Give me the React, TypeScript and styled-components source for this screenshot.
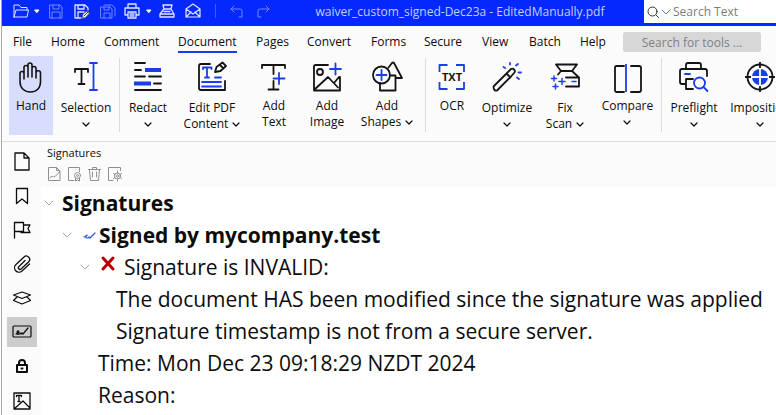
import React from 'react';
import styled, { createGlobalStyle, css } from 'styled-components';

const blue = '#0528ff';
const accent = '#1a3fe6';
const ink = '#141414';

const GlobalStyle = createGlobalStyle`
  *, *::before, *::after { box-sizing: border-box; }
  body { margin: 0; background: #fff; overflow: hidden; }
  button, input { font: inherit; color: inherit; }
`;

const Window = styled.div`
  display: flex;
  flex-direction: column;
  min-height: 100vh;
  margin-left: 1px;
  border-left: 1px solid #a8a8a8;
  background: #fbfbfb;
  color: #0c0c0c;
  font: 12px/16px 'Open Sans', 'Noto Sans', sans-serif;
`;

const TitleBar = styled.header`
  display: flex;
  align-items: flex-start;
  height: 26px;
  padding-left: 10px;
  background: ${blue};
  color: #dfe4ff;
`;

const QuickButton = styled.button<{ $width: number; $dim?: boolean }>`
  display: flex;
  align-items: center;
  justify-content: center;
  flex: none;
  width: ${(p) => p.$width}px;
  height: 22px;
  padding: 0;
  border: 0;
  background: none;
  opacity: ${(p) => (p.$dim ? 0.5 : 1)};
`;

const QuickDivider = styled.span`
  flex: none;
  width: 1px;
  height: 14px;
  margin: 4px 8px 0 9px;
  background: #3f5cff;
`;

const FileName = styled.h1`
  flex: 1;
  margin: 0;
  padding-top: 4px;
  color: #c3ccff;
  font-size: 12px;
  font-weight: 400;
  line-height: 16px;
  text-align: center;
  white-space: nowrap;
`;

const TextSearch = styled.label`
  display: flex;
  align-items: center;
  flex: none;
  gap: 2px;
  width: 132px;
  height: 23px;
  padding-left: 3px;
  background: #fff;
`;

const TextSearchInput = styled.input`
  flex: 1;
  min-width: 0;
  padding: 0;
  border: 0;
  outline: 0;
  background: none;
  &::placeholder { color: #7d7d7d; opacity: 1; }
`;

const MenuBar = styled.nav`
  display: flex;
  align-items: center;
  height: 30px;
  padding: 2px 0 0 11px;
`;

const MenuLink = styled.a<{ $width: number; $active?: boolean }>`
  flex: none;
  width: ${(p) => p.$width}px;
  padding-top: 2px;
  color: inherit;
  text-decoration: none;
  white-space: nowrap;
  span {
    display: inline-block;
    padding-bottom: 1px;
    border-bottom: 2px solid ${(p) => (p.$active ? accent : 'transparent')};
  }
`;

const ToolSearch = styled.input`
  flex: none;
  width: 138px;
  height: 20px;
  padding: 0;
  border: 0;
  border-radius: 2px;
  background: #d7d7d7;
  text-align: center;
  &::placeholder { color: #7f7f7f; opacity: 1; }
`;

const Ribbon = styled.div`
  display: flex;
  height: 86px;
  padding-left: 7px;
  border-bottom: 1px solid #dedede;
  overflow: hidden;
`;

const Tool = styled.button<{ $width: number; $active?: boolean; $low?: boolean }>`
  display: flex;
  flex-direction: column;
  align-items: center;
  flex: none;
  gap: ${(p) => (p.$low ? 7 : 5)}px;
  width: ${(p) => p.$width}px;
  height: 79px;
  padding: 5px 0 0;
  border: 0;
  background: ${(p) => (p.$active ? '#d9ddfd' : 'none')};
`;

const ToolLabel = styled.span`
  display: flex;
  flex-direction: column;
  align-items: center;
  line-height: 16px;
  white-space: nowrap;
`;

const LabelLine = styled.span`
  display: flex;
  align-items: center;
  gap: 4px;
  height: 16px;
`;

const RibbonDivider = styled.span<{ $space?: number }>`
  flex: none;
  width: 1px;
  height: 74px;
  margin: 2px 0 0 ${(p) => p.$space ?? 0}px;
  background: #dcdcdc;
`;

const Workspace = styled.div`
  display: flex;
  flex: 1;
`;

const SideBar = styled.nav`
  display: flex;
  flex-direction: column;
  flex: none;
  gap: 4px;
  width: 39px;
  padding: 5px 0 0 5px;
`;

const SideButton = styled.button<{ $active?: boolean }>`
  display: flex;
  align-items: center;
  justify-content: center;
  width: 30px;
  height: 30px;
  padding: 0;
  border: 0;
  background: ${(p) => (p.$active ? '#cccccc' : 'none')};
`;

const Panel = styled.section`
  display: flex;
  flex: 1;
  flex-direction: column;
`;

const PanelHeader = styled.div`
  height: 45px;
  padding: 3px 0 0 6px;
`;

const PanelTitle = styled.h2`
  margin: 0;
  font-size: 11px;
  font-weight: 400;
  line-height: 16px;
`;

const PanelTools = styled.div`
  display: flex;
  gap: 4px;
  padding-top: 5px;
`;

const PanelButton = styled.button`
  display: flex;
  width: 16px;
  height: 16px;
  padding: 0;
  border: 0;
  background: none;
`;

const Tree = styled.ul`
  flex: 1;
  margin: 0;
  padding: 0;
  background: #fff;
  list-style: none;
`;

const TreeRow = styled.li<{ $indent: number; $bold?: boolean }>`
  display: flex;
  align-items: center;
  height: 32px;
  padding-left: ${(p) => p.$indent}px;
  font-size: 21px;
  line-height: 32px;
  white-space: nowrap;
  ${(p) => p.$bold && css`font-weight: 700;`}
`;

const Toggle = styled.button<{ $space: number }>`
  display: flex;
  flex: none;
  width: 10px;
  margin-right: ${(p) => p.$space}px;
  padding: 0;
  border: 0;
  background: none;
`;

const StatusIcon = styled.span<{ $space: number }>`
  display: flex;
  flex: none;
  margin-right: ${(p) => p.$space}px;
`;

const Svg = styled.svg`
  display: block;
  flex: none;
  overflow: visible;
  fill: none;
  stroke: currentColor;
  stroke-linecap: round;
  stroke-linejoin: round;
`;

type IconProps = { w?: number; h?: number; stroke?: number; children: React.ReactNode };

const Icon = ({ w = 16, h = 16, stroke = 1, children }: IconProps) => (
  <Svg width={w} height={h} viewBox={`0 0 ${w} ${h}`} strokeWidth={stroke} aria-hidden="true">
    {children}
  </Svg>
);

const BigIcon = ({ children }: { children: React.ReactNode }) => (
  <Icon w={32} h={32} stroke={1.8}><g stroke={ink}>{children}</g></Icon>
);

const Caret = () => <Icon w={8} h={5}><path d="M2 1h4L4 3.500z" fill="#fff" stroke="#fff" /></Icon>;
const Chevron = () => <Icon w={8} h={5} stroke={1.2}><path d="M1 1l3 3 3-3" /></Icon>;

const quickItems = [
  { name: 'Open', width: 18, icon: <Icon><path d="M1 14V2h5l2 2.500h6V7M1 14h13l1.500-7H3L1 14" /></Icon> },
  { name: 'Open menu', width: 14, icon: <Caret /> },
  { name: 'Save', width: 24, dim: true, icon: <Icon><path d="M2 2h10l2 2v11H2zM5 2v4h6V2M4 15V9h8v6" /></Icon> },
  {
    name: 'Save as', width: 28,
    icon: <Icon stroke={1.3}><path d="M7 15H1V2h10l3 3v2M4 2v4h6V2M4 15V9h6" /><path d="M8 15l1-4 4-3 2.500 2-4 4.500z" fill="#fff" stroke="#5a5a5a" strokeWidth="1" /><path d="M10 13l4-4" stroke="#333" strokeWidth="1" /></Icon>,
  },
  { name: 'Save all', width: 24, dim: true, icon: <Icon><path d="M1 4h9l2 2v9H1zM4 4v3h5V4M4 15v-5h6v5M4 2h8l3 3v8" /></Icon> },
  { name: 'Print', width: 24, icon: <Icon stroke={1.3}><path d="M4 5V1h8v4M4 12H1V5h14v7h-3M4 9h8v6H4zM6 11h4M6 13h4" /></Icon> },
  { name: 'Print menu', width: 10, icon: <Caret /> },
  { name: 'Scan', width: 26, icon: <Icon stroke={1.3}><path d="M4 2h9l-1 4H5zM5 6l-4 5v3h14v-3l-3-5M1 11h14M5 8.500h6" /></Icon> },
  { name: 'Email', width: 26, icon: <Icon stroke={1.2}><path d="M1 6l7-5 7 5v8H1zM1 6l7 5 7-5M1 14l5-5M15 14l-5-5" /></Icon> },
];

const menuItems = [
  { name: 'File', width: 38 }, { name: 'Home', width: 53 }, { name: 'Comment', width: 74 },
  { name: 'Document', width: 78, active: true }, { name: 'Pages', width: 51 },
  { name: 'Convert', width: 64 }, { name: 'Forms', width: 53 }, { name: 'Secure', width: 58 },
  { name: 'View', width: 47 }, { name: 'Batch', width: 51 }, { name: 'Help', width: 43 },
];

type ToolItem = {
  lines: string[];
  width: number;
  menu?: 'inline' | 'below';
  active?: boolean;
  low?: boolean;
  icon: React.ReactNode;
};

const HandIcon = () => (
  <BigIcon>
    <path strokeWidth="1.600" d="M5 21V12.500a2 2 0 0 1 4 0V18M9 13V6.500a2 2 0 0 1 4 0V16M13 7V4a2 2 0 0 1 4 0v12M17 7.500a2 2 0 0 1 4 0V17M21 14v-2a2.200 2.200 0 0 1 4.500 0v9c0 6-4 10-10 10S5 27 5 21" />
  </BigIcon>
);
const SelectionIcon = () => (
  <BigIcon>
    <path d="M5 11V8h13v3M11.500 8v15M8.500 23h6" />
    <path stroke={accent} d="M20 2h7M20 29h7M23.500 2v27" />
  </BigIcon>
);
const RedactIcon = () => (
  <BigIcon>
    <path d="M3 2h10M3 9h6M3 15.500h10M17 15.500h12M22 22.500h7M3 29h26" />
    <path stroke={accent} strokeWidth="4" strokeLinecap="butt" d="M13 9h16M2 22.500h17" />
  </BigIcon>
);
const EditIcon = () => (
  <BigIcon>
    <path d="M14 3H5Q3 3 3 5v22q0 2 2 2h24V20M19 11l1.500-5 6-4.500 3.500 3.500-5.500 5zM24 4l3 3" />
    <path stroke={accent} d="M7 8V6.500h8.500V8M11 7v9M9 16.500h4M19 16.500h6M6 21h19M6 25.500h19" />
  </BigIcon>
);
const AddTextIcon = () => (
  <BigIcon>
    <path d="M4 7V4h23v3M15.500 4v9M15.500 20v8M10.500 28.500h10" />
    <path stroke={accent} d="M15.500 17.500h11M21 12v11" />
  </BigIcon>
);
const AddImageIcon = () => (
  <BigIcon>
    <path d="M17 4H4.500Q3 4 3 5.500V29.500H29V16M3 29l14-13 10 10.500M23 22l5-6" />
    <circle cx="9" cy="11" r="3" />
    <path stroke={accent} d="M19 8h11M24.500 2.500v11" />
  </BigIcon>
);
const AddShapesIcon = () => (
  <BigIcon>
    <path d="M17.500 6.500L21 2q1-1 2 0l8 15H25M9 22v7.500h15.500v-15H20" />
    <circle cx="10.500" cy="14" r="8.500" />
    <path stroke={accent} d="M5.500 14h10M10.500 9v10" />
  </BigIcon>
);
const OcrIcon = () => (
  <BigIcon>
    <path stroke={accent} strokeLinecap="butt" d="M3.500 11V4h8M20 4h8v7M28 21v7h-8M11.500 28h-8v-7" />
    <text x="16" y="20" textAnchor="middle" fill={ink} stroke="none" fontSize="11" fontWeight="700">TXT</text>
  </BigIcon>
);
const OptimizeIcon = () => (
  <BigIcon>
    <path d="M2.500 25.500L16 12l4-4q1.500-1 3 .5t.5 3l-4 4.500L6 29.500q-1.500.5-2.500-.5t-1-3.500zM15.500 12.500l4 4" />
    <path stroke={accent} d="M14 7l-1.500-1M19 3.500V2M25 4.500L27 3M27.500 11.500H30M26 16.500l2 1.500" />
  </BigIcon>
);
const FixIcon = () => (
  <BigIcon>
    <path d="M7 3.500h21l-5 6.500h-11zM12 10L9 13.500M23 10l7 6.500v9H17M17 16.500h13" />
    <path stroke={accent} strokeWidth="1.500" d="M5 15v5M2.500 17.500h5M13 17.500v6M10 20.500h6M6.500 23v5M4 25.500h5M23 20.500h4" />
  </BigIcon>
);
const CompareIcon = () => (
  <BigIcon>
    <path d="M12 5H4.500Q3 5 3 6.500V29.500Q3 31 4.500 31H12M19 5h8q2 0 2 2v22q0 2-2 2h-8" />
    <path stroke={accent} strokeLinecap="butt" d="M14 3v28" />
  </BigIcon>
);
const PreflightIcon = () => (
  <BigIcon>
    <path d="M8 8V4q0-2 2-2h11q2 0 2 2v4M7 23H4q-2 0-2-2V10q0-2 2-2h23q2 0 2 2v5M15 28H8V18h7" />
    <path stroke={accent} d="M7 13h5M25.500 26l4 4" />
    <circle cx="21.500" cy="22" r="5.500" stroke={accent} />
  </BigIcon>
);
const ImpositionIcon = () => (
  <BigIcon>
    <circle cx="16" cy="16" r="12.500" />
    <circle cx="16" cy="16" r="8" fill={accent} stroke="none" />
    <path stroke="#fff" strokeLinecap="butt" d="M8 16h16M16 8v16" />
    <path strokeLinecap="butt" d="M1 16h6M25 16h6M16 1v6M16 25v6" />
  </BigIcon>
);

const toolGroups: ToolItem[][] = [
  [
    { lines: ['Hand'], width: 44, active: true, icon: <HandIcon /> },
    { lines: ['Selection'], width: 66, menu: 'below', low: true, icon: <SelectionIcon /> },
  ],
  [
    { lines: ['Redact'], width: 56, menu: 'below', low: true, icon: <RedactIcon /> },
    { lines: ['Edit PDF', 'Content'], width: 72, menu: 'inline', low: true, icon: <EditIcon /> },
    { lines: ['Add', 'Text'], width: 52, icon: <AddTextIcon /> },
    { lines: ['Add', 'Image'], width: 54, icon: <AddImageIcon /> },
    { lines: ['Add', 'Shapes'], width: 66, menu: 'inline', icon: <AddShapesIcon /> },
  ],
  [
    { lines: ['OCR'], width: 52, icon: <OcrIcon /> },
    { lines: ['Optimize'], width: 58, menu: 'below', low: true, icon: <OptimizeIcon /> },
    { lines: ['Fix', 'Scan'], width: 58, menu: 'inline', low: true, icon: <FixIcon /> },
    { lines: ['Compare'], width: 67, menu: 'below', icon: <CompareIcon /> },
  ],
  [
    { lines: ['Preflight'], width: 64, menu: 'below', low: true, icon: <PreflightIcon /> },
    { lines: ['Imposition'], width: 68, menu: 'below', low: true, icon: <ImpositionIcon /> },
  ],
];

const sideItems = [
  { name: 'Page thumbnails', icon: <Icon w={20} h={20} stroke={1.3}><path d="M3 1h9l5 5v12H3zM12 1v5h5" /></Icon> },
  { name: 'Bookmarks', icon: <Icon w={20} h={20} stroke={1.3}><path d="M4.500 2.500h11v15L10 13l-5.500 4.500z" /></Icon> },
  { name: 'Destinations', icon: <Icon w={20} h={20} stroke={1.3}><path d="M2.500 18V2.500h9v9h-9M11.500 5h6.500l-2 3.500 2 4H9v-1" /></Icon> },
  { name: 'Attachments', icon: <Icon w={20} h={20} stroke={1.3}><path d="M13 6.500L7 12.500a1.500 1.500 0 0 0 2 2.500L16.500 8a3.200 3.200 0 0 0-4.500-5L4 10.500a4.200 4.200 0 0 0 6 6.500l7.500-7" /></Icon> },
  { name: 'Layers', icon: <Icon w={20} h={20} stroke={1.2}><path d="M10 4l8.500 3L10 10.500 1.500 7zM5 9l-3.500 3.500L10 16l8.500-3.500L15 9" /></Icon> },
  {
    name: 'Signatures', active: true,
    icon: <Icon w={20} h={20} stroke={1.2}><rect x="1" y="4" width="18" height="11" rx="1" /><path d="M4 12q4-2 2.500-3t-1.500 3q2 1 3-1l1 1 1-1 1 1 5-6" /></Icon>,
  },
  { name: 'Security', icon: <Icon w={20} h={20} stroke={2}><path d="M5 9h10v7H5zM7 9V7q0-3 3-3t3 3v2M9.500 12.500h1" /></Icon> },
  {
    name: 'Content', icon: <Icon w={20} h={20} stroke={1.3}><path d="M2 3h16v16H2zM2 19l9-8 7 7M4.500 6.500V5.500h5v1M7 5.500v6M6 11.500h2" /></Icon>,
  },
];

const panelItems = [
  { name: 'Sign', icon: <path d="M8 14.500H1.500V1.500h8l3 3v2M9.500 1.500v3h3M3 11.500q3-2 3-1t2 0l5-5v9H8" /> },
  { name: 'Certify', icon: <><path d="M7 14.500H1.500V1.500h11v4M8.500 12v3l2-1 2 1v-3" /><circle cx="10.500" cy="9.500" r="3" /><circle cx="10.500" cy="9.500" r="1" /></> },
  { name: 'Clear', icon: <path d="M1.500 3.500h12M5.500 3.500v-2h4v2M2.500 3.500l1 11h8l1-11M5.500 6v5M9.500 6v5" /> },
  {
    name: 'Validate',
    icon: <><path d="M6 14.500H1.500V1.500h12v3M10.500 5v2M10.500 13v2M6.500 7.500l1.500 1M13 11.500l1.500 1M14.500 7.500l-1.500 1M8 11.500l-1.500 1" /><circle cx="10.500" cy="10" r="3" /><circle cx="10.500" cy="10" r="1" /></>,
  },
];

const Expander = ({ label, space }: { label: string; space: number }) => (
  <Toggle $space={space} aria-label={label} aria-expanded="true">
    <Icon w={10} h={6}><path stroke="#a8a8a8" d="M1 1l4 4 4-4" /></Icon>
  </Toggle>
);

const App = () => (
  <>
    <GlobalStyle />
    <Window>
      <TitleBar>
        {quickItems.map((q) => (
          <QuickButton key={q.name} $width={q.width} $dim={q.dim} aria-label={q.name}>{q.icon}</QuickButton>
        ))}
        <QuickDivider />
        <QuickButton $width={26} $dim aria-label="Undo"><Icon w={14} h={16}><path d="M4 3L1 6l3 3M1 6h9q2 0 2 2v6H9" /></Icon></QuickButton>
        <QuickButton $width={26} $dim aria-label="Redo"><Icon w={14} h={16}><path d="M10 3l3 3-3 3M13 6H4Q2 6 2 8v6h3" /></Icon></QuickButton>
        <FileName>waiver_custom_signed-Dec23a - EditedManually.pdf</FileName>
        <TextSearch aria-label="Search text">
          <Icon w={12} h={12}><g stroke="#333"><circle cx="5.500" cy="5.500" r="4.500" /><path d="M9 9l2.500 2.500" /></g></Icon>
          <Icon w={10} h={6}><path stroke="#5b78d8" d="M1 1l4 4 4-4" /></Icon>
          <TextSearchInput type="text" placeholder="Search Text" />
        </TextSearch>
      </TitleBar>

      <MenuBar>
        {menuItems.map((m) => (
          <MenuLink key={m.name} href="#" $width={m.width} $active={m.active}><span>{m.name}</span></MenuLink>
        ))}
        <ToolSearch type="text" aria-label="Search for tools" placeholder="Search for tools ..." />
      </MenuBar>

      <Ribbon>
        {toolGroups.map((group, i) => (
          <React.Fragment key={group[0].lines[0]}>
            {i > 0 && <RibbonDivider $space={i === 2 ? 5 : 0} />}
            {group.map((t) => (
              <Tool key={t.lines.join(' ')} $width={t.width} $active={t.active} $low={t.low}>
                {t.icon}
                <ToolLabel>
                  {t.lines.map((line, n) => (
                    <LabelLine key={line}>
                      {line}
                      {t.menu === 'inline' && n === t.lines.length - 1 && <Chevron />}
                    </LabelLine>
                  ))}
                  {t.menu === 'below' && <LabelLine><Chevron /></LabelLine>}
                </ToolLabel>
              </Tool>
            ))}
          </React.Fragment>
        ))}
      </Ribbon>

      <Workspace>
        <SideBar>
          {sideItems.map((s) => (
            <SideButton key={s.name} $active={s.active} aria-label={s.name}>{s.icon}</SideButton>
          ))}
        </SideBar>
        <Panel>
          <PanelHeader>
            <PanelTitle>Signatures</PanelTitle>
            <PanelTools>
              {panelItems.map((p) => (
                <PanelButton key={p.name} aria-label={p.name}>
                  <Icon><g stroke="#8f8f8f">{p.icon}</g></Icon>
                </PanelButton>
              ))}
            </PanelTools>
          </PanelHeader>
          <Tree>
            <TreeRow $indent={3} $bold><Expander label="Signatures" space={8} />Signatures</TreeRow>
            <TreeRow $indent={21} $bold>
              <Expander label="Signed by mycompany.test" space={11} />
              <StatusIcon $space={4}>
                <Icon w={12} h={6} stroke={1.2}><path stroke="#3155dd" d="M1 5q4-2 3-2t-1 3h2l1-1 1 1 5-5" /></Icon>
              </StatusIcon>
              Signed by mycompany.test
            </TreeRow>
            <TreeRow $indent={39}>
              <Expander label="Signature is INVALID" space={10} />
              <StatusIcon $space={8}>
                <Icon w={16} h={22} stroke={3}><path stroke="#b80000" d="M3 2l10 11M13 2L3 13" /></Icon>
              </StatusIcon>
              Signature is INVALID:
            </TreeRow>
            <TreeRow $indent={75}>The document HAS been modified since the signature was applied</TreeRow>
            <TreeRow $indent={75}>Signature timestamp is not from a secure server.</TreeRow>
            <TreeRow $indent={57}>Time: Mon Dec 23 09:18:29 NZDT 2024</TreeRow>
            <TreeRow $indent={57}>Reason:</TreeRow>
          </Tree>
        </Panel>
      </Workspace>
    </Window>
  </>
);

export default App;
